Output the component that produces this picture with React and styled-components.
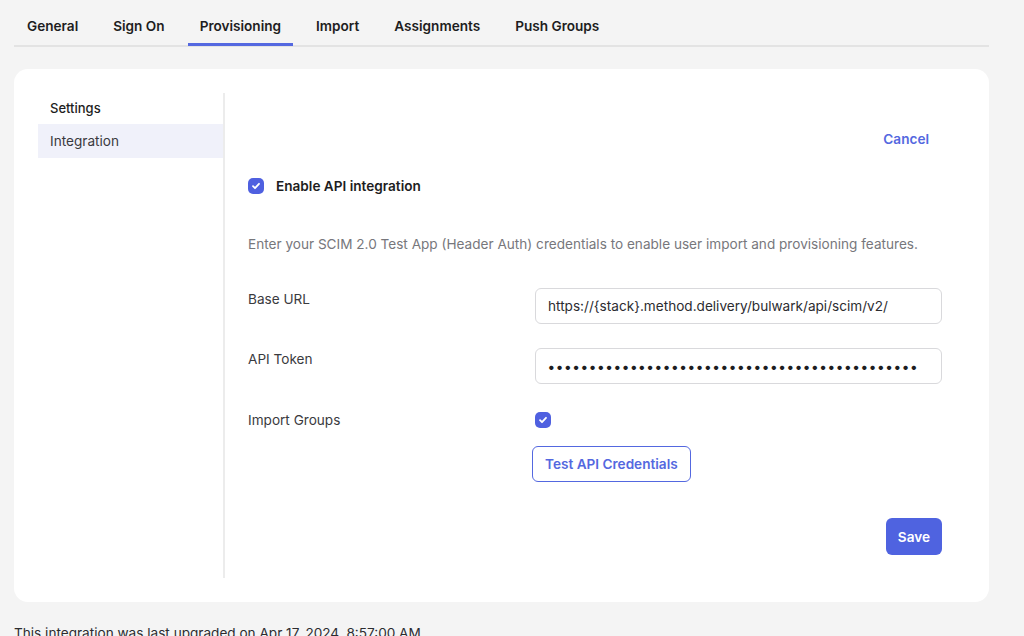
import styled, { createGlobalStyle } from "styled-components";

const GlobalStyle = createGlobalStyle`
  body {
    margin: 0;
    background: #f4f4f4;
    font-family: Inter, "Noto Sans", sans-serif;
    color: #1d1d21;
  }
`;

const Page = styled.div`
  padding: 0 35px 0 14px;
`;

const TabBar = styled.nav`
  display: flex;
  gap: 11px;
  border-bottom: 2px solid #e3e3e3;
  padding-left: 1px;
`;

const Tab = styled.div`
  padding: 16px 12px 7px;
  font-size: 13.6px;
  line-height: 20px;
  font-weight: 600;
  color: #1d1d21;
  border-bottom: 3px solid ${(p) => (p.active ? "#5468e0" : "transparent")};
  margin-bottom: -1px;
`;

const Card = styled.section`
  margin-top: 22px;
  background: #fff;
  border-radius: 14px;
  padding: 24px 47px 24px 24px;
  display: flex;
`;

const SideNav = styled.aside`
  width: 185px;
  border-right: 2px solid #ececec;
  flex-shrink: 0;
`;

const NavHeading = styled.div`
  box-sizing: border-box;
  height: 31px;
  padding: 5px 12px 0;
  font-size: 13px;
  line-height: 20px;
  font-weight: 500;
  color: #1d1d21;
`;

const NavItem = styled.div`
  padding: 7px 12px;
  font-size: 13.6px;
  line-height: 20px;
  color: #3a3a3e;
  background: ${(p) => (p.active ? "#f0f1fa" : "transparent")};
`;

const Content = styled.div`
  flex: 1;
  padding-left: 23px;
  display: flex;
  flex-direction: column;
`;

const HeaderRow = styled.div`
  display: flex;
  justify-content: flex-end;
  margin-top: 28px;
`;

const LinkButton = styled.button`
  border: none;
  background: none;
  font-family: inherit;
  font-size: 13.6px;
  font-weight: 600;
  line-height: 20px;
  color: #5468e0;
  padding: 8px 13px;
  cursor: pointer;
`;

const CheckRow = styled.label`
  display: flex;
  align-items: center;
  gap: 12px;
  margin-top: 19px;
  font-size: 13.6px;
  line-height: 20px;
  font-weight: 600;
  color: #1d1d21;
`;

const Box = styled.span`
  width: 16px;
  height: 16px;
  border-radius: 5px;
  background: #4f60e0;
  display: inline-flex;
  align-items: center;
  justify-content: center;
  flex-shrink: 0;
`;

const Description = styled.p`
  margin: 38px 0 0;
  font-size: 13.6px;
  line-height: 20px;
  color: #77777c;
`;

const Form = styled.div`
  display: grid;
  grid-template-columns: 287px 407px;
  row-gap: 24px;
  margin-top: 34px;
`;

const Label = styled.div`
  font-size: 13.6px;
  line-height: 20px;
  color: #3a3a3e;
  padding-top: ${(p) => p.pt || 1}px;
`;

const Input = styled.div`
  height: 36px;
  box-sizing: border-box;
  border: 1px solid #d9d9dc;
  border-radius: 6px;
  padding: 0 12px;
  display: flex;
  align-items: center;
  font-size: 13.6px;
  color: #2c2c30;
  white-space: nowrap;
  overflow: hidden;
`;

const Dots = styled.span`
  letter-spacing: 1.6px;
  font-size: 14px;
  font-weight: 700;
  color: #1d1d21;
`;

const CheckCell = styled.div`
  display: flex;
  padding-top: 4px;
`;

const OutlineButton = styled.button`
  grid-column: 2;
  justify-self: start;
  margin-left: -3px;
  margin-top: -8px;
  height: 36px;
  padding: 0 12px;
  border: 1px solid #5468e0;
  border-radius: 6px;
  background: #fff;
  font-family: inherit;
  font-size: 13.6px;
  font-weight: 600;
  color: #5468e0;
`;

const Footer = styled.div`
  display: flex;
  justify-content: flex-end;
  margin-top: 36px;
`;

const PrimaryButton = styled.button`
  height: 37px;
  padding: 0 12px;
  border: none;
  border-radius: 6px;
  background: #4f63e0;
  color: #fff;
  font-family: inherit;
  font-size: 13.6px;
  font-weight: 600;
`;

const Filler = styled.div`
  height: 23px;
`;

const Note = styled.p`
  margin: 21px 0 0;
  font-size: 13.6px;
  line-height: 20px;
  color: #2c2c30;
`;

function Check() {
  return (
    <Box>
      <svg width="10" height="10" viewBox="0 0 10 10" fill="none">
        <path
          d="M2 5.2l2 2 4-4.4"
          stroke="#fff"
          strokeWidth="1.8"
          strokeLinecap="round"
          strokeLinejoin="round"
        />
      </svg>
    </Box>
  );
}

const tabs = ["General", "Sign On", "Provisioning", "Import", "Assignments", "Push Groups"];

export default function App() {
  return (
    <Page>
      <GlobalStyle />
      <TabBar>
        {tabs.map((t) => (
          <Tab key={t} active={t === "Provisioning"}>
            {t}
          </Tab>
        ))}
      </TabBar>
      <Card>
        <SideNav>
          <NavHeading>Settings</NavHeading>
          <NavItem active>Integration</NavItem>
        </SideNav>
        <Content>
          <HeaderRow>
            <LinkButton>Cancel</LinkButton>
          </HeaderRow>
          <CheckRow>
            <Check />
            Enable API integration
          </CheckRow>
          <Description>
            Enter your SCIM 2.0 Test App (Header Auth) credentials to enable user import and
            provisioning features.
          </Description>
          <Form>
            <Label>Base URL</Label>
            <Input>https://{"{stack}"}.method.delivery/bulwark/api/scim/v2/</Input>
            <Label>API Token</Label>
            <Input>
              <Dots>{"•".repeat(45)}</Dots>
            </Input>
            <Label pt={2}>Import Groups</Label>
            <CheckCell>
              <Check />
            </CheckCell>
            <OutlineButton>Test API Credentials</OutlineButton>
          </Form>
          <Footer>
            <PrimaryButton>Save</PrimaryButton>
          </Footer>
          <Filler />
        </Content>
      </Card>
      <Note>This integration was last upgraded on Apr 17, 2024, 8:57:00 AM</Note>
    </Page>
  );
}
